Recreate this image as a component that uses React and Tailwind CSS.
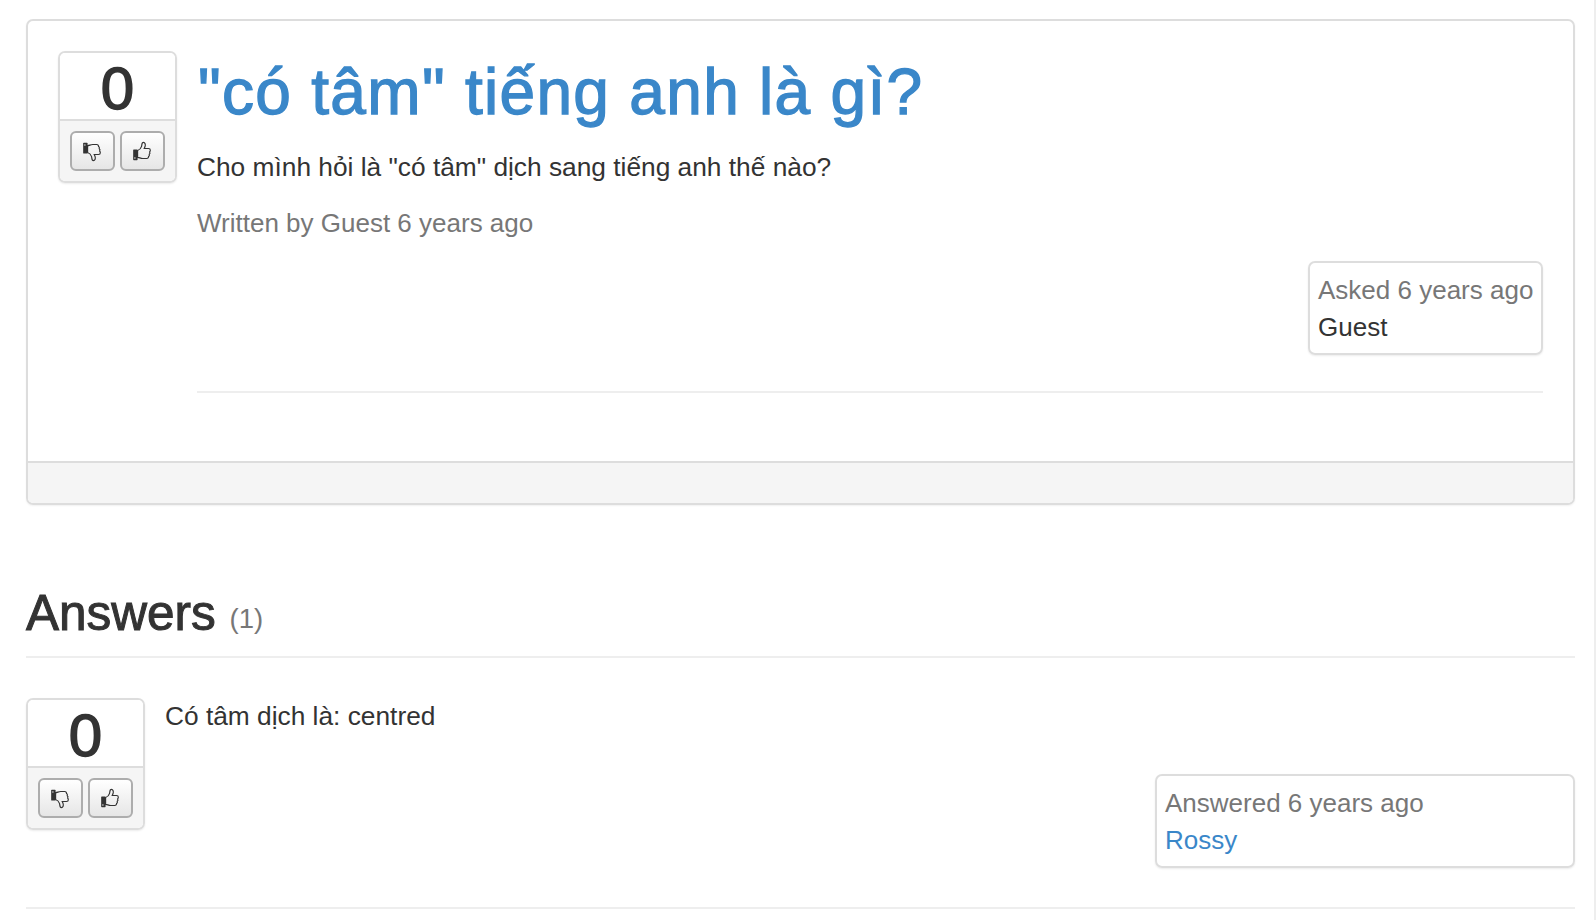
import React from "react";

function Thumb({ down }) {
  return (
    <svg width="21" height="21" viewBox="0 0 18 18" className={down ? "-scale-y-100" : ""}>
      <rect x="1" y="7.2" width="3.8" height="9.3" rx="0.6" fill="#333" />
      <circle cx="2.5" cy="14.6" r="0.6" fill="#eee" />
      <path
        d="M4.8 8.2c1.6-.5 2.9-2 3.4-3.6.3-1 .1-3.4 1.5-3.4 1.6 0 2 2 1.5 3.6l-.7 1.6h3.6c1 0 1.6.7 1.6 1.6 0 .6-.3 1.1-.6 1.4.3.5.4 1.5-.3 2 .2.7 0 1.5-.6 1.8.1 1.1-.6 1.8-1.6 1.8H9.2c-2 0-2.8-1-4.4-1z"
        fill="none"
        stroke="#333"
        strokeWidth="1"
      />
    </svg>
  );
}

function Vote() {
  return (
    <div className="w-[119px] h-[132px] shrink-0 rounded-[7px] border-2 border-[#ddd] overflow-hidden shadow-[0_1px_2px_rgba(0,0,0,0.08)]">
      <div className="h-[66px] bg-white text-center text-[60px] leading-[71px] text-[#333] [-webkit-text-stroke:1.5px]">0</div>
      <div className="h-[62px] border-t-2 border-[#ddd] bg-[#f5f5f5] flex gap-[5px] pl-[10px] pt-[10px]">
        <button className="w-[45px] h-[40px] rounded-[6px] border-2 border-[#adadad] bg-gradient-to-b from-white to-[#e6e6e6] flex items-center justify-center">
          <Thumb down />
        </button>
        <button className="w-[45px] h-[40px] rounded-[6px] border-2 border-[#adadad] bg-gradient-to-b from-white to-[#e6e6e6] flex items-center justify-center">
          <Thumb />
        </button>
      </div>
    </div>
  );
}

export default function App() {
  return (
    <div className="h-[920px] overflow-hidden bg-white pl-[26px] pr-[19px] pt-[19px] text-[26px] leading-[37px] text-[#333] border-r-2 border-[#eee] font-['Liberation_Sans',Arial,sans-serif]">
      <div className="h-[486px] rounded-[7px] border-2 border-[#ddd] flex flex-col shadow-[0_1px_2px_rgba(0,0,0,0.06)]">
        <div className="flex-1 flex pl-[30px] pr-[30px] pt-[30px]">
          <Vote />
          <div className="flex-1 pl-[20px]">
            <h1 className="text-[#3a87c9] text-[64px] leading-[76px] tracking-[1.3px] ml-px mt-[3px] mb-[19px] [-webkit-text-stroke:1.3px]">"có tâm" tiếng anh là gì?</h1>
            <p className="mb-[19px] text-[26.3px]">Cho mình hỏi là "có tâm" dịch sang tiếng anh thế nào?</p>
            <p className="text-[#777]">Written by Guest 6 years ago</p>
            <div className="flex justify-end mt-[19px]">
              <div className="w-[235px] h-[94px] rounded-[7px] border-2 border-[#ddd] pl-[8px] pt-[9px] shadow-[0_1px_2px_rgba(0,0,0,0.08)]">
                <div className="text-[#777]">Asked 6 years ago</div>
                <div>Guest</div>
              </div>
            </div>
            <div className="border-t-2 border-[#eee] mt-[36px]"></div>
          </div>
        </div>
        <div className="h-[42px] border-t-2 border-[#ddd] bg-[#f5f5f5] rounded-b-[5px]"></div>
      </div>
      <h2 className="text-[49.5px] leading-[52px] font-normal mt-[82px] pb-[11px] border-b-2 border-[#eee] text-[#333] [-webkit-text-stroke:1px]">
        Answers <small className="text-[27.5px] font-normal text-[#777] align-[2px] [-webkit-text-stroke:0px]">(1)</small>
      </h2>
      <div className="flex mt-[40px] pb-[39px] border-b-2 border-[#eee]">
        <Vote />
        <div className="flex-1 pl-[20px]">
          <p className="text-[26.3px]">Có tâm dịch là: centred</p>
          <div className="flex justify-end mt-[39px]">
            <div className="w-[420px] h-[94px] rounded-[7px] border-2 border-[#ddd] pl-[8px] pt-[9px] shadow-[0_1px_2px_rgba(0,0,0,0.08)]">
              <div className="text-[#777]">Answered 6 years ago</div>
              <div className="text-[#3a87c9]">Rossy</div>
            </div>
          </div>
        </div>
      </div>
    </div>
  );
}
